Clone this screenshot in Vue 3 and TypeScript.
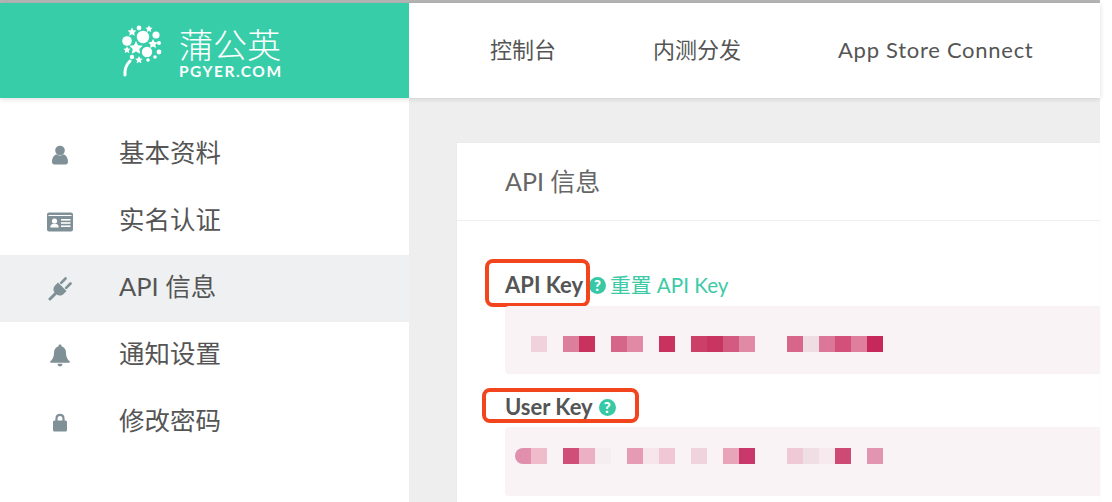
<script setup lang="ts">
interface Cell { x: number; c: string }
interface Dot { x: number; y: number; r: number }

const sideItems = [
  { label: '基本资料', icon: 'user' },
  { label: '实名认证', icon: 'card' },
  { label: 'API 信息', icon: 'plug', active: true },
  { label: '通知设置', icon: 'bell' },
  { label: '修改密码', icon: 'lock' },
]
const navItems = ['控制台', '内测分发']

const row1: Cell[] = [
  { x: 531, c: '#f0d2dd' }, { x: 563, c: '#dc7f9c' }, { x: 579, c: '#c9325f' },
  { x: 611, c: '#d5668a' }, { x: 627, c: '#e08aa5' }, { x: 659, c: '#c9325f' },
  { x: 691, c: '#cc4068' }, { x: 707, c: '#c93561' }, { x: 723, c: '#d35a80' },
  { x: 739, c: '#e08aa5' }, { x: 787, c: '#d8668a' }, { x: 803, c: '#f0dde4' },
  { x: 819, c: '#dc779a' }, { x: 835, c: '#d2507a' }, { x: 851, c: '#df7f9d' },
  { x: 867, c: '#c6285a' },
]
const row2: Cell[] = [
  { x: 515, c: '#e08fac' }, { x: 531, c: '#eebccb' }, { x: 563, c: '#cf4f78' },
  { x: 579, c: '#ebb0c3' }, { x: 595, c: '#f6edf0' }, { x: 627, c: '#e59bb3' },
  { x: 643, c: '#f6e6ec' }, { x: 659, c: '#f0c8d5' }, { x: 691, c: '#efd3dd' },
  { x: 723, c: '#e8a5ba' }, { x: 739, c: '#c9386a' }, { x: 787, c: '#f0c9d6' },
  { x: 803, c: '#efdfe5' }, { x: 819, c: '#f7eaee' }, { x: 835, c: '#cd4a74' },
  { x: 867, c: '#e295b0' },
]
const cellStyle = (cell: Cell) => ({ left: `${cell.x - 505}px`, background: cell.c })

const circles: Dot[] = [
  { x: 143, y: 37, r: 6.2 }, { x: 127, y: 41, r: 4.8 }, { x: 147, y: 52, r: 5.2 },
  { x: 156, y: 35, r: 3.6 }, { x: 139, y: 28, r: 2.4 }, { x: 159, y: 52, r: 2.4 },
  { x: 132, y: 57, r: 2.2 }, { x: 148, y: 60, r: 1.8 }, { x: 155, y: 57, r: 1.8 },
  { x: 159, y: 43, r: 2 },
]
const starSpec: Dot[] = [
  { x: 132, y: 32, r: 4.6 }, { x: 149, y: 29, r: 3.8 }, { x: 136, y: 48, r: 7 },
  { x: 153, y: 44, r: 5 }, { x: 127, y: 50, r: 3.8 }, { x: 139, y: 60, r: 4 },
]
const starPoints = (s: Dot) => {
  const pts: string[] = []
  for (let i = 0; i < 10; i++) {
    const r = i % 2 === 0 ? s.r : s.r * 0.5
    const a = -Math.PI / 2 + (i * Math.PI) / 5
    pts.push(`${(s.x + r * Math.cos(a)).toFixed(2)},${(s.y + r * Math.sin(a)).toFixed(2)}`)
  }
  return pts.join(' ')
}
</script>

<template>
  <div class="page">
    <div class="frame">
      <header class="topbar">
        <div class="brand">
          <svg class="brand-mark" viewBox="120 23 44 56" width="44" height="56" aria-hidden="true">
            <circle v-for="(d, i) in circles" :key="i" :cx="d.x" :cy="d.y" :r="d.r" fill="#fff" />
            <polygon v-for="(s, i) in starSpec" :key="i" :points="starPoints(s)" fill="#fff" />
            <path d="M130 61 C126 65 124.500 70 125 75" fill="none" stroke="#fff" stroke-width="3" stroke-linecap="round" />
          </svg>
          <div class="brand-text">
            <div class="brand-cn">蒲公英</div>
            <div class="brand-en">PGYER.COM</div>
          </div>
        </div>
        <nav class="nav">
          <a v-for="n in navItems" :key="n" class="nav-link">{{ n }}</a>
          <a class="nav-link nav-latin">App Store Connect</a>
        </nav>
      </header>

      <div class="body">
        <aside class="side">
          <div v-for="item in sideItems" :key="item.label" class="side-item" :class="{ active: item.active }">
            <span class="side-icon">
              <svg v-if="item.icon === 'user'" width="18" height="20" viewBox="0 0 18 20">
                <circle cx="9" cy="5.500" r="4.800" fill="#7f9096" />
                <path d="M1 17 C1 12 3.500 9.500 6 9.500 C7.500 11 10.500 11 12 9.500 C14.500 9.500 17 12 17 17 C17 18.600 16 19.500 14.500 19.500 L3.500 19.500 C2 19.500 1 18.600 1 17 Z" fill="#7f9096" />
              </svg>
              <svg v-else-if="item.icon === 'card'" width="26" height="20" viewBox="0 0 26 20">
                <path d="M2 0.500 H24 A2 2 0 0 1 26 2.500 V17.500 A2 2 0 0 1 24 19.500 H2 A2 2 0 0 1 0 17.500 V2.500 A2 2 0 0 1 2 0.500 Z M1.500 3 V4 H24.500 V3 Z" fill="#7f9096" fill-rule="evenodd" />
                <circle cx="7.500" cy="9" r="2.600" fill="#fff" />
                <path d="M3.200 15.500 C3.200 12.800 5 11.800 7.500 11.800 C10 11.800 11.800 12.800 11.800 15.500 Z" fill="#fff" />
                <rect x="14" y="7" width="9.500" height="1.600" fill="#fff" />
                <rect x="14" y="10.200" width="9.500" height="1.600" fill="#fff" />
                <rect x="14" y="13.400" width="9.500" height="1.600" fill="#fff" />
              </svg>
              <svg v-else-if="item.icon === 'plug'" width="24" height="24" viewBox="0 0 24 24">
                <path d="M17.500 1.500 L13.200 5.800 M22.500 6.500 L18.200 10.800" stroke="#7f9096" stroke-width="2.600" stroke-linecap="round" />
                <path d="M10 5.500 L18.500 14 L15.500 17 C13.500 19 10.500 19 8.800 17.600 L6.400 15.200 C5 13.500 5 10.500 7 8.500 Z" fill="#7f9096" />
                <path d="M7.500 16.500 L2 22" stroke="#7f9096" stroke-width="3" stroke-linecap="round" />
              </svg>
              <svg v-else-if="item.icon === 'bell'" width="20" height="23" viewBox="0 0 20 23">
                <path d="M10 0.500 C11 0.500 11.500 1.200 11.500 2.200 C14.500 3 16 5.500 16 9 C16 13 17.500 15.500 19.800 17.500 C20 18.200 19.600 18.800 19 18.800 H1 C0.400 18.800 0 18.200 0.200 17.500 C2.500 15.500 4 13 4 9 C4 5.500 5.500 3 8.500 2.200 C8.500 1.200 9 0.500 10 0.500 Z" fill="#7f9096" />
                <path d="M7.500 19.800 H12.500 C12.500 21.300 11.400 22.500 10 22.500 C8.600 22.500 7.500 21.300 7.500 19.800 Z" fill="#7f9096" />
              </svg>
              <svg v-else width="14" height="19" viewBox="0 0 14 19">
                <path d="M3.500 8 V5.500 C3.500 3.300 5 1.800 7 1.800 C9 1.800 10.500 3.300 10.500 5.500 V8" fill="none" stroke="#7f9096" stroke-width="2.200" />
                <rect x="0" y="7.500" width="14" height="11" rx="1.500" fill="#7f9096" />
              </svg>
            </span>
            <span class="side-label">{{ item.label }}</span>
          </div>
        </aside>

        <main class="main">
          <section class="card">
            <h2 class="card-title">API 信息</h2>
            <div class="card-body">
              <div class="field-label api-label">
                <span class="label-text">API Key<span class="mark mark-api"></span></span>
                <span class="help help-api">?</span>
                <a class="reset">重置 API Key</a>
              </div>
              <div class="key-box">
                <i v-for="(cell, i) in row1" :key="i" class="cell cell-a" :style="cellStyle(cell)"></i>
              </div>
              <div class="field-label user-label">
                <span class="label-text">User Key<span class="mark mark-user"></span></span>
                <span class="help help-user">?</span>
              </div>
              <div class="key-box key-box-b">
                <i v-for="(cell, i) in row2" :key="i" class="cell cell-b" :class="{ 'cell-first': i === 0 }" :style="cellStyle(cell)"></i>
              </div>
            </div>
          </section>
        </main>
      </div>
    </div>
  </div>
</template>

<style>
html, body { margin: 0; background: #fff; }
</style>

<style scoped>
.page {
  width: 1112px;
  height: 502px;
  overflow: hidden;
  background: #fff;
  font-family: Lato, "Noto Sans CJK SC", sans-serif;
}
.frame {
  width: 1100px;
  height: 502px;
  display: flex;
  flex-direction: column;
  background: #eee;
  border-top: 3px solid #b6b6b6;
  box-sizing: border-box;
}
.topbar {
  height: 95px;
  flex: none;
  display: flex;
  background: #fff;
  box-shadow: 0 1px 5px rgba(0, 0, 0, 0.14);
  position: relative;
  z-index: 2;
}
.brand {
  width: 409px;
  flex: none;
  background: #37cda9;
  display: flex;
  align-items: flex-start;
  box-sizing: border-box;
  padding: 20px 0 0 120px;
  color: #fff;
}
.brand-mark { display: block; flex: none; }
.brand-text { margin-left: 15px; width: 104px; }
.brand-cn {
  font-family: "Noto Sans CJK SC", sans-serif;
  font-weight: 300;
  font-size: 34px;
  line-height: 41px;
  white-space: nowrap;
}
.brand-en {
  font-family: Lato, sans-serif;
  font-weight: 700;
  font-size: 15.5px;
  line-height: 14px;
  letter-spacing: 1.5px;
  white-space: nowrap;
}
.nav {
  display: flex;
  align-items: center;
  padding: 0 0 0 81px;
  gap: 97px;
  height: 95px;
}
.nav-link {
  font-size: 22px;
  line-height: 1;
  color: #555;
  white-space: nowrap;
  position: relative;
  top: -1px;
}
.nav-latin { letter-spacing: 0.72px; }
.body {
  flex: 1;
  display: flex;
  min-height: 0;
}
.side {
  width: 409px;
  flex: none;
  background: #fff;
  padding-top: 23px;
  box-sizing: border-box;
}
.side-item {
  height: 67px;
  display: flex;
  align-items: center;
  color: #555;
}
.side-item.active { background: #eef0f2; }
.side-icon {
  width: 119px;
  flex: none;
  display: flex;
  align-items: center;
  justify-content: center;
}
.side-icon svg { display: block; }
.side-label {
  font-size: 25.5px;
  line-height: 1;
  white-space: nowrap;
  padding-bottom: 4px;
}
.main {
  flex: 1;
  padding: 45px 0 0 48px;
  min-width: 0;
}
.card {
  background: #fff;
  height: 100%;
  box-shadow: 0 0 2px rgba(0, 0, 0, 0.04);
}
.card-title {
  margin: 0;
  height: 78px;
  box-sizing: border-box;
  border-bottom: 1px solid #eee;
  padding: 0 0 3px 48px;
  display: flex;
  align-items: center;
  font-size: 25px;
  font-weight: 400;
  color: #666;
}
.card-body { padding: 0 0 0 48px; }
.field-label {
  display: flex;
  align-items: flex-start;
  font-size: 22px;
  line-height: 24px;
  color: #555;
  box-sizing: border-box;
}
.api-label { height: 85px; padding-top: 52px; }
.user-label { height: 53px; padding-top: 21px; }
.label-text {
  font-weight: 700;
  position: relative;
  white-space: nowrap;
}
.mark {
  position: absolute;
  box-sizing: border-box;
  border: 4px solid #f2441d;
  border-radius: 8px;
}
.mark-api { left: -20px; top: -14px; width: 105px; height: 48px; }
.mark-user { left: -23px; top: -7px; width: 157px; height: 35px; }
.help {
  width: 17px;
  height: 17px;
  border-radius: 50%;
  background: #37c9a5;
  color: #fff;
  font-size: 15px;
  font-weight: 900;
  line-height: 17px;
  text-align: center;
  flex: none;
}
.help-api { margin-left: 6px; margin-top: 4px; }
.help-user { margin-left: 6px; margin-top: 4px; }
.reset {
  margin-left: 4px;
  color: #3dcaa6;
  white-space: nowrap;
  font-size: 20.7px;
}
.key-box {
  position: relative;
  height: 68px;
  background: #faf3f6;
  border-radius: 4px 0 0 4px;
}
.key-box-b { height: 69px; }
.cell {
  position: absolute;
  width: 16px;
  height: 16px;
  display: block;
}
.cell-a { top: 30px; }
.cell-b { top: 21px; }
.cell-first { border-radius: 8px 0 0 8px; }
</style>
